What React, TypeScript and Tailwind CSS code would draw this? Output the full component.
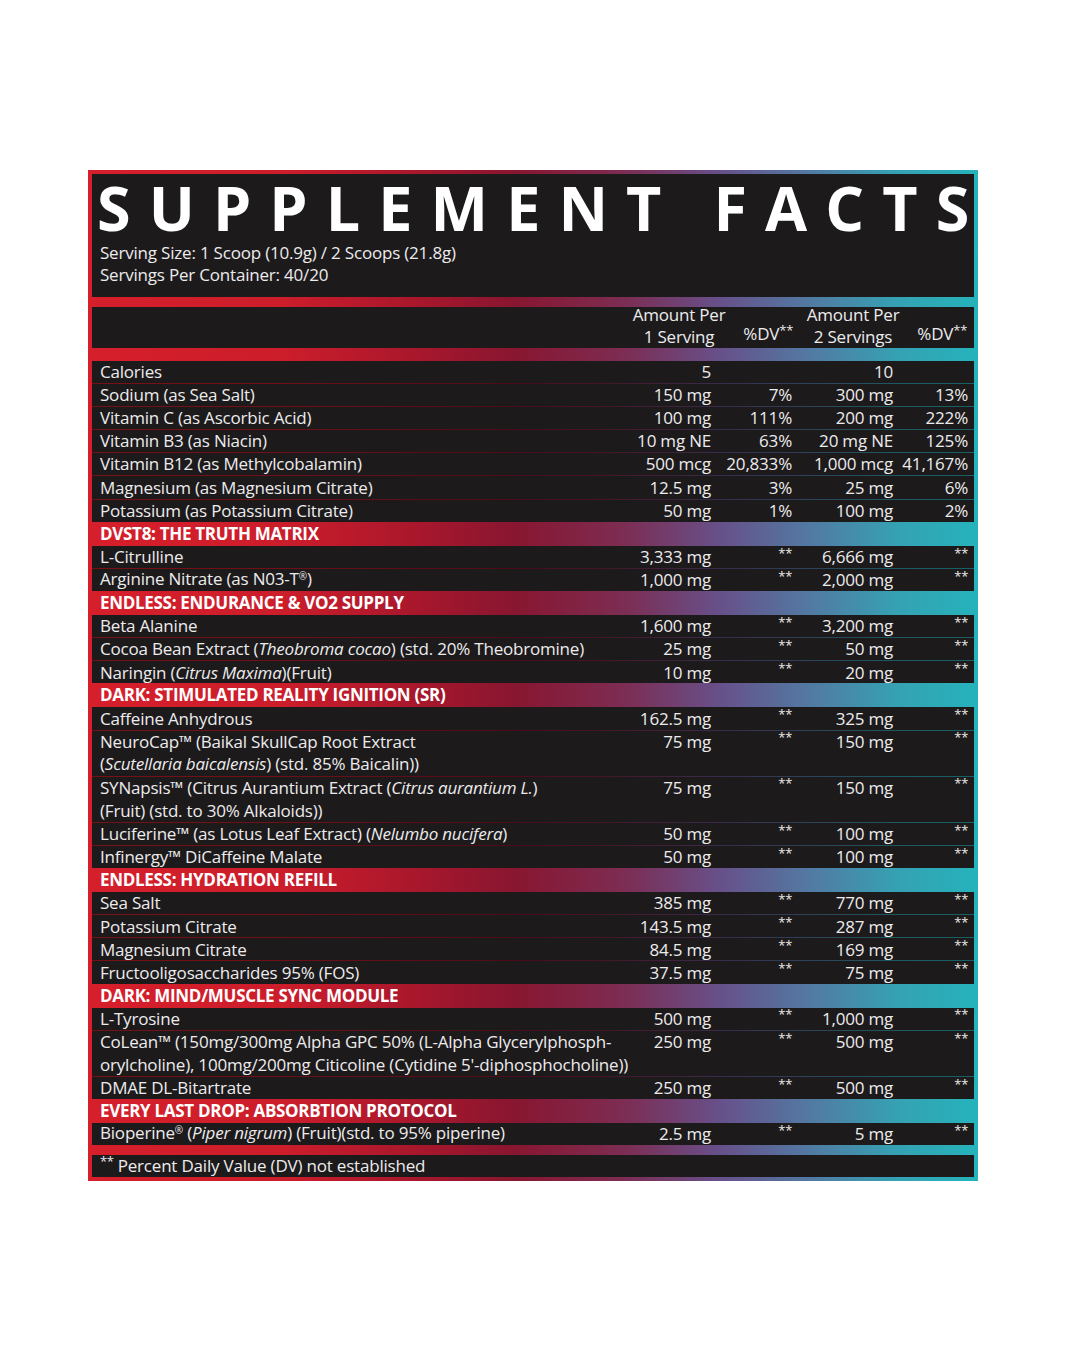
import React from "react";

type Cell = React.ReactNode;

const Stars = () => (
  <span className="relative -top-[5px] text-[13px] tracking-[-0.3px]">**</span>
);

const DV = ({ v }: { v: string }) => (v === "**" ? <Stars /> : <>{v}</>);

function Row({
  name,
  name2,
  a1,
  d1,
  a2,
  d2,
}: {
  name: Cell;
  name2?: Cell;
  a1: string;
  d1: string;
  a2: string;
  d2: string;
}) {
  return (
    <div
      className={
        "flex flex-col bg-[#1d1a1c] pl-[8px] pr-[6px] text-[#ececec] " +
        (name2 ? "h-[45.2px]" : "h-[22.1px]")
      }
    >
      <div className="flex h-[22.6px] items-center leading-[22px]">
        <div className="flex-1 whitespace-nowrap">{name}</div>
        <div className="w-[90px] whitespace-nowrap text-right">{a1}</div>
        <div className="w-[81px] whitespace-nowrap text-right">
          <DV v={d1} />
        </div>
        <div className="w-[101px] whitespace-nowrap text-right">{a2}</div>
        <div className="w-[75px] whitespace-nowrap text-right">
          <DV v={d2} />
        </div>
      </div>
      {name2 && (
        <div className="flex h-[22.6px] items-center whitespace-nowrap leading-[22px]">
          {name2}
        </div>
      )}
    </div>
  );
}

function Group({ children }: { children: React.ReactNode }) {
  return <div className="flex flex-col gap-px bg-black/45">{children}</div>;
}

function Section({ title }: { title: string }) {
  return (
    <div className="flex h-[24.1px] items-center pl-[8px] font-bold leading-[22px] tracking-[-0.3px] text-white">
      {title}
    </div>
  );
}

const I = ({ children }: { children: React.ReactNode }) => (
  <span className="italic">{children}</span>
);

const Sup = ({ children }: { children: React.ReactNode }) => (
  <span className="relative -top-[5px] text-[10px]">{children}</span>
);

export default function App() {
  return (
    <div
      className="min-h-[1350px] w-[1080px] bg-white pl-[88px] pt-[170px] text-[17px]"
      style={{ fontFamily: '"Open Sans", "Noto Sans", sans-serif' }}
    >
      <div className="w-[890px] bg-[linear-gradient(90deg,#d61f2b_0%,#cc1d2b_22%,#a8172c_37%,#881630_48%,#7d2c52_60%,#67508a_71%,#5279a2_81%,#35a2b3_91%,#25b3bb_100%)] p-[4px] tracking-[-0.2px]">
        {/* Title block */}
        <div className="flex h-[123px] flex-col bg-[#1d1a1c]">
          <div className="h-[68px] whitespace-nowrap pl-[5px] pt-[3px] text-[61px] font-bold leading-[61px] tracking-[18.1px] text-white">
            SUPPLEMENT FACTS
          </div>
          <div className="pl-[8px] leading-[22px] text-[#ececec]">
            <div>Serving Size: 1 Scoop (10.9g) / 2 Scoops (21.8g)</div>
            <div>Servings Per Container: 40/20</div>
          </div>
        </div>
        <div className="h-[10px]" />
        {/* Column header */}
        <div className="flex h-[41px] bg-[#1d1a1c] pr-[7px] leading-[22px] text-[#ececec]">
          <div className="flex-1" />
          <div className="-mt-[3px] flex w-[90px] flex-col items-center whitespace-nowrap">
            <div>Amount Per</div>
            <div>1 Serving</div>
          </div>
          <div className="flex w-[69px] flex-col justify-end whitespace-nowrap pb-[2px] text-right">
            <div>
              %DV<Stars />
            </div>
          </div>
          <div className="w-[15px]" />
          <div className="-mt-[3px] flex w-[90px] flex-col items-center whitespace-nowrap">
            <div>Amount Per</div>
            <div>2 Servings</div>
          </div>
          <div className="flex w-[69px] flex-col justify-end whitespace-nowrap pb-[2px] text-right">
            <div>
              %DV<Stars />
            </div>
          </div>
        </div>
        <div className="h-[13px]" />

        <Group>
          <Row name="Calories" a1="5" d1="" a2="10" d2="" />
          <Row name="Sodium (as Sea Salt)" a1="150 mg" d1="7%" a2="300 mg" d2="13%" />
          <Row name="Vitamin C (as Ascorbic Acid)" a1="100 mg" d1="111%" a2="200 mg" d2="222%" />
          <Row name="Vitamin B3 (as Niacin)" a1="10 mg NE" d1="63%" a2="20 mg NE" d2="125%" />
          <Row name="Vitamin B12 (as Methylcobalamin)" a1="500 mcg" d1="20,833%" a2="1,000 mcg" d2="41,167%" />
          <Row name="Magnesium (as Magnesium Citrate)" a1="12.5 mg" d1="3%" a2="25 mg" d2="6%" />
          <Row name="Potassium (as Potassium Citrate)" a1="50 mg" d1="1%" a2="100 mg" d2="2%" />
        </Group>
        <Section title="DVST8: THE TRUTH MATRIX" />
        <Group>
          <Row name="L-Citrulline" a1="3,333 mg" d1="**" a2="6,666 mg" d2="**" />
          <Row
            name={
              <>
                Arginine Nitrate (as N03-T<Sup>®</Sup>)
              </>
            }
            a1="1,000 mg"
            d1="**"
            a2="2,000 mg"
            d2="**"
          />
        </Group>
        <Section title="ENDLESS: ENDURANCE & VO2 SUPPLY" />
        <Group>
          <Row name="Beta Alanine" a1="1,600 mg" d1="**" a2="3,200 mg" d2="**" />
          <Row
            name={
              <>
                Cocoa Bean Extract (<I>Theobroma cocao</I>) (std. 20% Theobromine)
              </>
            }
            a1="25 mg"
            d1="**"
            a2="50 mg"
            d2="**"
          />
          <Row
            name={
              <>
                Naringin (<I>Citrus Maxima</I>)(Fruit)
              </>
            }
            a1="10 mg"
            d1="**"
            a2="20 mg"
            d2="**"
          />
        </Group>
        <Section title="DARK: STIMULATED REALITY IGNITION (SR)" />
        <Group>
          <Row name="Caffeine Anhydrous" a1="162.5 mg" d1="**" a2="325 mg" d2="**" />
          <Row
            name="NeuroCap™ (Baikal SkullCap Root Extract"
            name2={
              <>
                (<I>Scutellaria baicalensis</I>) (std. 85% Baicalin))
              </>
            }
            a1="75 mg"
            d1="**"
            a2="150 mg"
            d2="**"
          />
          <Row
            name={
              <>
                SYNapsis™ (Citrus Aurantium Extract (<I>Citrus aurantium L.</I>)
              </>
            }
            name2="(Fruit) (std. to 30% Alkaloids))"
            a1="75 mg"
            d1="**"
            a2="150 mg"
            d2="**"
          />
          <Row
            name={
              <>
                Luciferine™ (as Lotus Leaf Extract) (<I>Nelumbo nucifera</I>)
              </>
            }
            a1="50 mg"
            d1="**"
            a2="100 mg"
            d2="**"
          />
          <Row name="Infinergy™ DiCaffeine Malate" a1="50 mg" d1="**" a2="100 mg" d2="**" />
        </Group>
        <Section title="ENDLESS: HYDRATION REFILL" />
        <Group>
          <Row name="Sea Salt" a1="385 mg" d1="**" a2="770 mg" d2="**" />
          <Row name="Potassium Citrate" a1="143.5 mg" d1="**" a2="287 mg" d2="**" />
          <Row name="Magnesium Citrate" a1="84.5 mg" d1="**" a2="169 mg" d2="**" />
          <Row name="Fructooligosaccharides 95% (FOS)" a1="37.5 mg" d1="**" a2="75 mg" d2="**" />
        </Group>
        <Section title="DARK: MIND/MUSCLE SYNC MODULE" />
        <Group>
          <Row name="L-Tyrosine" a1="500 mg" d1="**" a2="1,000 mg" d2="**" />
          <Row
            name="CoLean™ (150mg/300mg Alpha GPC 50% (L-Alpha Glycerylphosph-"
            name2="orylcholine), 100mg/200mg Citicoline (Cytidine 5'-diphosphocholine))"
            a1="250 mg"
            d1="**"
            a2="500 mg"
            d2="**"
          />
          <Row name="DMAE DL-Bitartrate" a1="250 mg" d1="**" a2="500 mg" d2="**" />
        </Group>
        <Section title="EVERY LAST DROP: ABSORBTION PROTOCOL" />
        <Group>
          <Row
            name={
              <>
                Bioperine<Sup>®</Sup> (<I>Piper nigrum</I>) (Fruit)(std. to 95% piperine)
              </>
            }
            a1="2.5 mg"
            d1="**"
            a2="5 mg"
            d2="**"
          />
        </Group>
        <div className="h-[10px]" />
        <div className="flex h-[22px] items-center bg-[#1d1a1c] pl-[8px] leading-[22px] text-[#ececec]">
          <Stars />
          <span className="ml-[4px]">Percent Daily Value (DV) not established</span>
        </div>
      </div>
    </div>
  );
}
